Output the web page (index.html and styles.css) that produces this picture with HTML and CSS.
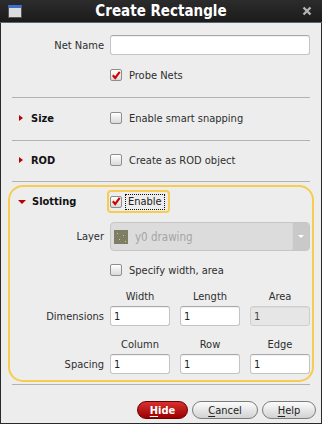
FILE: index.html
```html
<!DOCTYPE html>
<html lang="en">
<head>
    <meta charset="UTF-8">
    <title>Create Rectangle</title>
    <link rel="stylesheet" href="styles.css">
</head>
<body>
    <div class="window">
        <div class="titlebar">
            <span class="win-icon"></span>
            <span class="title">Create Rectangle</span>
            <svg class="close" width="10" height="10" viewBox="0 0 10 10">
                <path d="M1.5 1.5 L8.5 8.5 M8.5 1.5 L1.5 8.5" stroke="#b4b4b4" stroke-width="2.4" fill="none"/>
            </svg>
        </div>

        <div class="content">
            <div class="row net-row">
                <span class="label">Net Name</span>
                <input class="field" type="text">
            </div>

            <div class="row probe-row">
                <span></span>
                <span class="check">
                    <span class="box"><svg width="11" height="11" viewBox="0 0 11 11"><path d="M2 5.2 L4.6 8.2 L9.6 1.4" stroke="#d40000" stroke-width="2.3" fill="none"/></svg></span>
                    Probe Nets
                </span>
            </div>

            <div class="sep"></div>

            <div class="row section-row size-row">
                <span class="section"><span class="tri-right"></span>Size</span>
                <span class="check"><span class="box"></span>Enable smart snapping</span>
            </div>

            <div class="sep"></div>

            <div class="row section-row rod-row">
                <span class="section"><span class="tri-right"></span>ROD</span>
                <span class="check"><span class="box"></span>Create as ROD object</span>
            </div>

            <div class="sep sep-last"></div>

            <!-- Slotting group, highlighted -->
            <div class="group">
                <div class="row slot-row">
                    <span class="section"><span class="tri-down"></span>Slotting</span>
                    <span class="focus">
                        <span class="box"><svg width="11" height="11" viewBox="0 0 11 11"><path d="M2 5.2 L4.6 8.2 L9.6 1.4" stroke="#d40000" stroke-width="2.3" fill="none"/></svg></span>
                        <span class="dotted">Enable</span>
                    </span>
                </div>

                <div class="row layer-row">
                    <span class="label">Layer</span>
                    <div class="combo">
                        <span class="swatch"><i></i><i></i><i></i><i></i></span>
                        <span class="combo-text">y0 drawing</span>
                        <span class="combo-btn"></span>
                    </div>
                </div>

                <div class="row specify-row">
                    <span></span>
                    <span class="check"><span class="box"></span>Specify width, area</span>
                </div>

                <div class="row head-row">
                    <span></span>
                    <div class="triple">
                        <span>Width</span><span>Length</span><span>Area</span>
                    </div>
                </div>
                <div class="row input-row">
                    <span class="label">Dimensions</span>
                    <div class="triple">
                        <input class="field" value="1">
                        <input class="field" value="1">
                        <input class="field disabled" value="1" disabled>
                    </div>
                </div>

                <div class="row head-row head-second">
                    <span></span>
                    <div class="triple">
                        <span>Column</span><span>Row</span><span>Edge</span>
                    </div>
                </div>
                <div class="row input-row">
                    <span class="label">Spacing</span>
                    <div class="triple">
                        <input class="field" value="1">
                        <input class="field" value="1">
                        <input class="field" value="1">
                    </div>
                </div>
            </div>

            <div class="sep sep-bottom"></div>

            <div class="button-container">
                <button class="btn btn-hide"><u>H</u>ide</button>
                <button class="btn btn-cancel"><u>C</u>ancel</button>
                <button class="btn btn-help"><u>H</u>elp</button>
            </div>
        </div>
    </div>
</body>
</html>
```

FILE: styles.css
```css
body, html {
    margin: 0;
    padding: 0;
    width: 322px;
    height: 424px;
    overflow: hidden;
    font-family: "DejaVu Sans Condensed", "DejaVu Sans", sans-serif;
    font-stretch: condensed;
    font-size: 11px;
    color: #2e2e2e;
    background-color: #ededed;
}

.window {
    width: 322px;
    height: 424px;
    box-sizing: border-box;
    display: flex;
    flex-direction: column;
    background-color: #ededed;
    border-bottom: 1px solid #2a2a2a;
}

/* title bar */
.titlebar {
    height: 22px;
    flex: none;
    display: flex;
    align-items: center;
    position: relative;
    background: linear-gradient(#2c2c2c, #1b1b1b);
    border-bottom: 1px solid #55657a;
}

.win-icon {
    position: absolute;
    left: 8px;
    top: 5px;
    width: 12px;
    height: 9px;
    background: #dcdcdc;
    border: 1px solid #555;
    border-top: 3px solid #3d6fcf;
}

.title {
    flex: 1;
    text-align: center;
    color: #fff;
    font-weight: bold;
    font-size: 15px;
}

.close {
    position: absolute;
    right: 10px;
    top: 6px;
}

/* body */
.content {
    flex: 1;
    padding: 0 11px;
    border-left: 1px solid #2a2a2a;
    border-right: 1px solid #2a2a2a;
    display: flex;
    flex-direction: column;
}

.row {
    display: grid;
    grid-template-columns: 92px 200px;
    column-gap: 6px;
    align-items: center;
}

.label {
    text-align: right;
}

.field {
    box-sizing: border-box;
    height: 20px;
    width: 100%;
    margin: 0;
    padding: 0 3px;
    border: 1px solid #c4c4c4;
    border-top-color: #a8a8a8;
    border-radius: 3px;
    background: #fff;
    font-family: inherit;
    font-stretch: condensed;
    font-size: 11px;
    color: #222;
    box-shadow: inset 0 1px 1px rgba(0, 0, 0, 0.06);
}

.field.disabled {
    background: #e6e6e6;
    color: #444;
    border-color: #d0d0d0;
}

.net-row {
    margin-top: 12px;
}

.probe-row {
    margin-top: 10px;
    height: 20px;
}

.check {
    display: flex;
    align-items: center;
    gap: 7px;
}

.box {
    box-sizing: border-box;
    width: 12px;
    height: 12px;
    border: 1px solid #8e8e8e;
    border-radius: 2px;
    background: linear-gradient(#ffffff, #d9d9d9);
    display: flex;
    align-items: center;
    justify-content: center;
    flex: none;
}

.box svg {
    display: block;
}

.sep {
    height: 1px;
    background: #b2b2b2;
    margin-top: 12px;
}

.section-row {
    height: 20px;
    margin-top: 10px;
}

.rod-row {
    margin-top: 9px;
}

.sep-last {
    margin-top: 11px;
}

.section {
    display: flex;
    align-items: center;
    font-weight: bold;
    color: #111;
    padding-left: 7px;
}

.tri-right {
    width: 0;
    height: 0;
    border-left: 4px solid #b80000;
    border-top: 3.5px solid transparent;
    border-bottom: 3.5px solid transparent;
    margin-right: 8px;
}

.tri-down {
    width: 0;
    height: 0;
    border-top: 4px solid #b80000;
    border-left: 4px solid transparent;
    border-right: 4px solid transparent;
    margin-left: -1px;
    margin-right: 6px;
}

/* slotting group */
.group {
    margin: 3px -4px 0;
    padding: 3px 2px 6px;
    border: 2px solid #f8cc4f;
    border-radius: 15px;
}

.slot-row {
    height: 23px;
}

.focus {
    justify-self: start;
    margin-left: -3px;
    box-sizing: border-box;
    height: 23px;
    padding: 0 3px 0 1px;
    border: 2px solid #f8cc4f;
    border-radius: 4px;
    display: flex;
    align-items: center;
    gap: 3px;
}

.dotted {
    border: 1px dotted #111;
    padding: 0 2px;
    line-height: 14px;
    color: #222;
}

.layer-row {
    margin-top: 9px;
}

.combo {
    box-sizing: border-box;
    height: 29px;
    display: flex;
    align-items: center;
    background: #dcdcdc;
    border: 1px solid #c6c6c6;
    border-radius: 4px;
    overflow: hidden;
}

.swatch {
    position: relative;
    width: 14px;
    height: 14px;
    margin-left: 3px;
    background: #7d7d68;
    flex: none;
}

.swatch i {
    position: absolute;
    width: 1px;
    height: 1px;
    background: #e0d050;
}

.swatch i:nth-child(1) { left: 3px; top: 3px; }
.swatch i:nth-child(2) { left: 9px; top: 5px; }
.swatch i:nth-child(3) { left: 5px; top: 9px; }
.swatch i:nth-child(4) { left: 11px; top: 11px; }

.combo-text {
    flex: 1;
    margin-left: 7px;
    color: #a4a4a4;
    font-size: 11.5px;
}

.combo-btn {
    position: relative;
    width: 16px;
    height: 100%;
    background: #c9c9c9;
    border-left: 1px solid #d6d6d6;
}

.combo-btn::after {
    content: "";
    position: absolute;
    left: 5px;
    top: 12px;
    border-top: 3px solid #fff;
    border-left: 3px solid transparent;
    border-right: 3px solid transparent;
}

.specify-row {
    margin-top: 9px;
    height: 20px;
}

.triple {
    display: grid;
    grid-template-columns: 60px 60px 60px;
    column-gap: 10px;
}

.head-row {
    margin-top: 9px;
    height: 14px;
}

.head-row .triple span {
    text-align: center;
}

.head-second {
    margin-top: 11px;
}

.input-row {
    margin-top: 3px;
}

.sep-bottom {
    margin-top: 2px;
}

/* buttons */
.button-container {
    display: flex;
    justify-content: flex-end;
    gap: 4px;
    margin-top: 16px;
    margin-right: -6px;
}

.btn {
    height: 18px;
    padding: 0;
    border-radius: 9px;
    font-family: inherit;
    font-stretch: condensed;
    font-size: 11px;
    cursor: pointer;
    border: 1px solid #7c7c7c;
    background: linear-gradient(#fcfcfc, #d2d2d2);
    color: #222;
}

.btn u {
    text-decoration-thickness: 1px;
    text-underline-offset: 2px;
}

.btn-hide {
    width: 51px;
    border-color: #6a0000;
    background: linear-gradient(#d83030, #9c0000);
    color: #fff;
    font-weight: bold;
}

.btn-cancel {
    width: 66px;
}

.btn-help {
    width: 54px;
}
```
